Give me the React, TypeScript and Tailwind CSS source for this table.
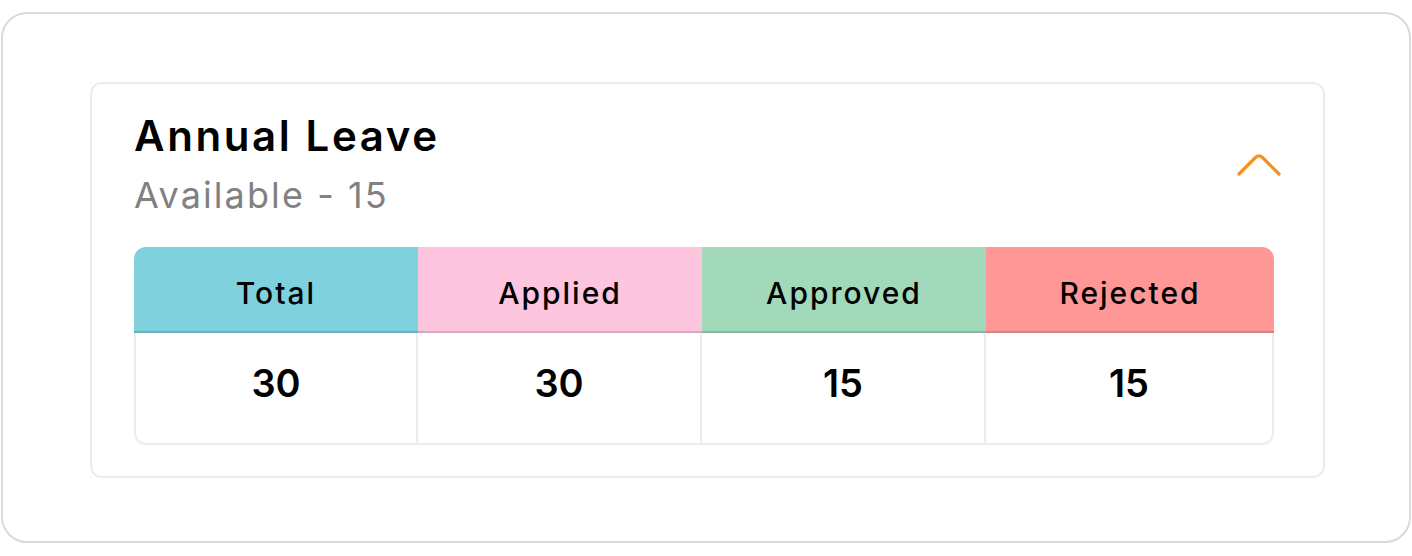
import React from 'react'

const stats = [
    {label: 'Total', value: 30, head: 'bg-[#7fd1de]'},
    {label: 'Applied', value: 30, head: 'bg-[#fdc5de]'},
    {label: 'Approved', value: 15, head: 'bg-[#a3d9bb]'},
    {label: 'Rejected', value: 15, head: 'bg-[#ff9797]'},
]

const ChevronUp = () => (
    <svg width="46" height="28" viewBox="0 0 46 28" fill="none" aria-hidden="true">
        <path d="M3 24 L19.5 7.5 Q23 4 26.5 7.5 L43 24" stroke="#f7901e" strokeWidth="3.2" strokeLinecap="round" strokeLinejoin="round" />
    </svg>
)

export default function App() {
    return (
        <div className="bg-white w-[1412px] h-[556px] pt-[12px] pl-[1px] font-['Inter',sans-serif]">
            <div className="w-[1410px] h-[531px] border-2 border-[#dadada] rounded-[26px] pt-[68px] pl-[87px]">
                <div className="w-[1235px] border-2 border-[#e8edf3] rounded-[12px] pl-[42px] pr-[49px] pt-[28px] pb-[31px]">
                    <div className="flex justify-between items-start">
                        <div>
                            <h2 className="text-[42px] leading-[48px] font-semibold text-black tracking-[2.6px]">Annual Leave</h2>
                            <p className="text-[36px] leading-[44px] mt-[13px] text-[#818181] tracking-[2.1px]">Available - 15</p>
                        </div>
                        <div className="mt-[38px] -mr-[8px]">
                            <ChevronUp />
                        </div>
                    </div>

                    <div className="mt-[30px] grid grid-cols-[284px_284px_284px_1fr]">
                        {stats.map((s, idx) => (
                            <div key={s.label} className="flex flex-col">
                                <div className={`${s.head} h-[86px] pt-[8px] flex items-center justify-center border-b-2 border-black/15 ${idx == 0 ? 'rounded-tl-[12px]' : ''} ${idx == 3 ? 'rounded-tr-[12px]' : ''}`}>
                                    <span className="text-[30px] font-medium text-black tracking-[2px]">{s.label}</span>
                                </div>
                                <div className={`h-[112px] pb-[10px] flex items-center justify-center border-b-2 border-[#ededed] ${idx < 3 ? 'border-r-2' : 'border-r-2 rounded-br-[12px]'} ${idx == 0 ? 'border-l-2 rounded-bl-[12px]' : ''}`}>
                                    <span className="text-[38px] font-semibold text-black">{s.value}</span>
                                </div>
                            </div>
                        ))}
                    </div>
                </div>
            </div>
        </div>
    )
}
